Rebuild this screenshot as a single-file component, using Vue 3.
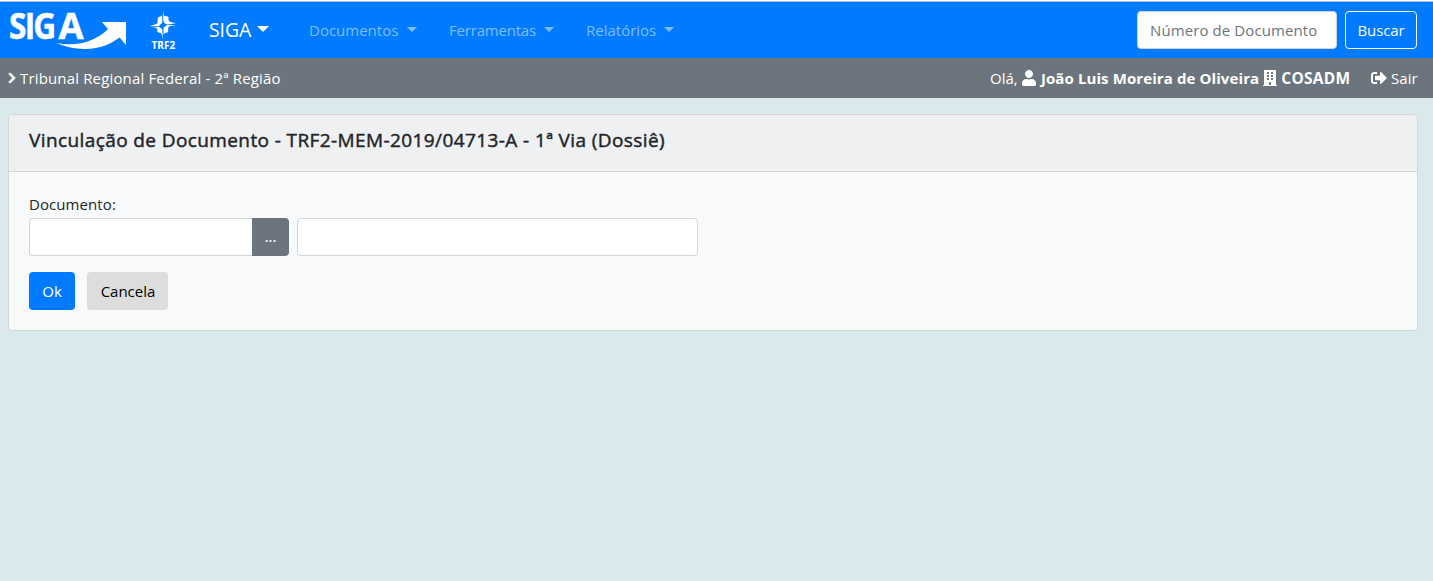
<script setup>
const menus = [
  { label: 'Documentos', name: 'documentos' },
  { label: 'Ferramentas', name: 'ferramentas' },
  { label: 'Relatórios', name: 'relatorios' },
]
</script>

<template>
  <div class="page">
    <nav class="navbar">
      <svg class="logo" width="120" height="40" viewBox="0 0 120 40" fill="#fff">
        <text x="1" y="29" class="logo-text" textLength="45.500" lengthAdjust="spacingAndGlyphs">SIG</text>
        <text x="50.500" y="29" class="logo-text" textLength="23" lengthAdjust="spacingAndGlyphs">A</text>
        <path d="M48 33C59 35 70 35 81 31C88 28.500 95 24 100 19L94 12H118V35L111.500 27.500C103 34 92 39 77 39C66 39 56 36 48 33Z" />
      </svg>
      <svg class="court" width="28" height="40" viewBox="0 0 28 40" fill="#fff">
        <g transform="translate(-.5 -1.700)">
          <path d="M14.700 1.500L15.500 6.500C17 7 19 7 20 7.500C20 10 19.500 11.500 22 12.700L27.500 14L19 15.200C17 15.200 14.700 13 14.700 10.500Z" />
          <path d="M13.700 6V13.500L10.500 16.700L1.500 16.700L8 14.800C9.500 14 9 12 9.300 9C9.800 7.500 12 7.500 13.700 6Z" />
          <path d="M1.500 17.400L10.500 17.400L13.700 20L14.500 30L13 24.500C12 23.300 10.500 23.500 9 23C8.800 20.500 9 19 7 18.200Z" />
          <path d="M15 25.500V18.500L18.500 15.700H28L21 16.900C19 18 20 20 19.500 23C18 23.500 16 23.500 15 25.500Z" />
        </g>
        <text x="2.600" y="38" class="court-text" textLength="23.500" lengthAdjust="spacingAndGlyphs">TRF2</text>
      </svg>
      <a class="brand"><span>SIGA</span><i class="caret"></i></a>
      <a v-for="menu in menus" :key="menu.name" class="menu" :class="menu.name">
        <span>{{ menu.label }}</span><i class="caret"></i>
      </a>
      <form class="search" @submit.prevent>
        <input type="text" placeholder="Número de Documento" />
        <button class="outline">Buscar</button>
      </form>
    </nav>

    <div class="subbar">
      <svg class="chevron" width="8" height="12" viewBox="0 0 320 512"><path fill="#fff" stroke="#fff" stroke-width="35" d="M285 273 91 467c-9 9-25 9-34 0l-23-22c-9-10-9-25 0-34l154-155L34 101c-9-9-9-24 0-34l23-22c9-9 25-9 34 0l194 194c10 9 10 25 0 34z" /></svg>
      <span class="region">Tribunal Regional Federal - 2ª Região</span>
      <div class="account">
        <span class="hello">Olá,</span>
        <svg class="user" width="14" height="16" viewBox="0 0 448 512" fill="#fff"><path d="M224 256c71 0 128-57 128-128S295 0 224 0 96 57 96 128s57 128 128 128zm90 32h-17c-45 21-101 21-146 0h-17C60 288 0 348 0 422v42c0 26 22 48 48 48h352c26 0 48-22 48-48v-42c0-74-60-134-134-134z" /></svg>
        <strong class="name">João Luis Moreira de Oliveira</strong>
        <svg class="building" width="14" height="16" viewBox="0 0 448 512" fill="#fff"><path fill-rule="evenodd" d="M436 480h-20V24c0-13-11-24-24-24H56C43 0 32 11 32 24v456H12c-7 0-12 5-12 12v20h448v-20c0-7-5-12-12-12zM128 76c0-7 5-12 12-12h40c7 0 12 5 12 12v40c0 7-5 12-12 12h-40c-7 0-12-5-12-12V76zm0 96c0-7 5-12 12-12h40c7 0 12 5 12 12v40c0 7-5 12-12 12h-40c-7 0-12-5-12-12v-40zm52 148h-40c-7 0-12-5-12-12v-40c0-7 5-12 12-12h40c7 0 12 5 12 12v40c0 7-5 12-12 12zm76 160h-64v-84c0-7 5-12 12-12h40c7 0 12 5 12 12v84zm64-172c0 7-5 12-12 12h-40c-7 0-12-5-12-12v-40c0-7 5-12 12-12h40c7 0 12 5 12 12v40zm0-96c0 7-5 12-12 12h-40c-7 0-12-5-12-12v-40c0-7 5-12 12-12h40c7 0 12 5 12 12v40zm0-96c0 7-5 12-12 12h-40c-7 0-12-5-12-12V76c0-7 5-12 12-12h40c7 0 12 5 12 12v40z" /></svg>
        <strong class="unit">COSADM</strong>
        <svg class="exit" width="16" height="16" viewBox="0 0 512 512" fill="#fff"><path d="M497 273 329 441c-15 15-41 4-41-17v-96H152c-13 0-24-11-24-24v-96c0-13 11-24 24-24h136V88c0-21 26-32 41-17l168 168c9 9 9 25 0 34zM192 436v-40c0-7-5-12-12-12H96c-18 0-32-14-32-32V160c0-18 14-32 32-32h84c7 0 12-5 12-12V76c0-7-5-12-12-12H96c-53 0-96 43-96 96v192c0 53 43 96 96 96h84c7 0 12-5 12-12z" /></svg>
        <span class="leave">Sair</span>
      </div>
    </div>

    <main class="card">
      <header><h5>Vinculação de Documento - TRF2-MEM-2019/04713-A - 1ª Via (Dossiê)</h5></header>
      <form class="body" @submit.prevent>
        <label>Documento:</label>
        <div class="row">
          <input class="code" type="text" />
          <button class="pick">...</button>
          <input class="description" type="text" />
        </div>
        <div class="actions">
          <button class="ok"><span>Ok</span></button>
          <button class="cancel"><span>Cancela</span></button>
        </div>
      </form>
    </main>
  </div>
</template>

<style>
body { background: #dae9ec; }
</style>

<style scoped>
.page, .page * { box-sizing: border-box; }
.page { min-height: 581px; background: #dae9ec; font-family: "Segoe UI", "Open Sans", "Noto Sans", sans-serif; font-size: 15px; line-height: 24px; color: #212529; }
input, button { font: inherit; margin: 0; height: 38px; border-radius: 4px; }
.navbar { height: 58px; border-top: 1px solid #fff; background: #007bff; box-shadow: inset 0 1px #b8bcc0; display: flex; align-items: center; padding: 1px 16px 0 8px; color: #fff; white-space: nowrap; }
svg { display: block; flex: none; overflow: visible; }
.logo { margin: -1px 21px 0 0; }
.logo-text { font-size: 36px; font-weight: 700; letter-spacing: -2px; stroke: #fff; stroke-width: .5px; }
.court { margin-top: 1px; }
.court-text { font-size: 10.5px; font-weight: 700; }
.caret { border: solid transparent; border-width: 5px 5.5px 0; border-top-color: currentColor; }
.brand { display: flex; align-items: center; justify-content: space-between; width: 60px; margin-left: 32px; font-size: 19.5px; letter-spacing: -.1px; }
.brand .caret { border-width: 6px 6px 0; border-top-color: #fff; margin-top: -2px; }
.menu { display: flex; align-items: center; justify-content: space-between; color: #80bdff; }
.menu .caret { margin-top: -2px; }
.documentos { width: 108px; margin-left: 40px; }
.ferramentas { width: 105px; margin-left: 32px; letter-spacing: -.2px; }
.relatorios { width: 88px; margin-left: 32px; }
.search { display: flex; gap: 8px; margin-left: auto; }
.search input { width: 200px; border: 1px solid #ced4da; padding: 0 12px; background: #fff; letter-spacing: .1px; }
.search input::placeholder { color: #6c757d; opacity: 1; }
.outline { width: 72px; border: 1px solid #f8f9fa; background: transparent; color: #f8f9fa; padding: 0; letter-spacing: -.1px; }
.subbar { height: 40px; background: #6c757d; color: #fff; display: flex; align-items: center; padding: 0 15px 0 8px; white-space: nowrap; }
.chevron { margin: -1px 4px 0 0; }
.region { letter-spacing: .155px; }
.account { display: flex; align-items: center; margin-left: auto; width: 428px; }
.hello { width: 32px; }
.user { margin-right: 5px; }
.name { width: 223px; letter-spacing: .1px; }
.building { margin-right: 4px; }
.unit { width: 90px; font-size: 15.5px; letter-spacing: .25px; }
.exit { margin-right: 4px; }
.leave { width: 27px; }
.card { margin: 16px 15px 0 8px; height: 217px; border: 1px solid #d3d7d9; border-radius: 4px; background: #f8f9fb; overflow: hidden; }
header { height: 57px; background: #eff0f2; border-bottom: 1px solid #d2d4d6; padding: 13px 20px 0; }
h5 { margin: 0; font-size: 19px; line-height: 24px; font-weight: 400; letter-spacing: .4px; -webkit-text-stroke: .45px #212529; white-space: nowrap; }
.body { padding: 20px; }
label { display: block; height: 26px; letter-spacing: .08px; }
.row { display: flex; }
.row input { border: 1px solid #ced4da; background: #fff; }
.row .code { width: 223px; border-radius: 4px 0 0 4px; border-right: 0; }
.pick { width: 37px; border: 0; border-radius: 0 4px 4px 0; background: #6c757d; color: #fff; padding: 0; font-weight: 600; font-size: 14px; }
.description { width: 401px; margin-left: 8px; }
.actions { display: flex; gap: 12px; margin-top: 16px; }
.actions button { border: 0; padding: 0; }
.ok { width: 46px; background: #007bff; color: #fff; }
.actions .cancel { width: 81px; background: #ddd; color: #000; padding-left: 1px; }
</style>
